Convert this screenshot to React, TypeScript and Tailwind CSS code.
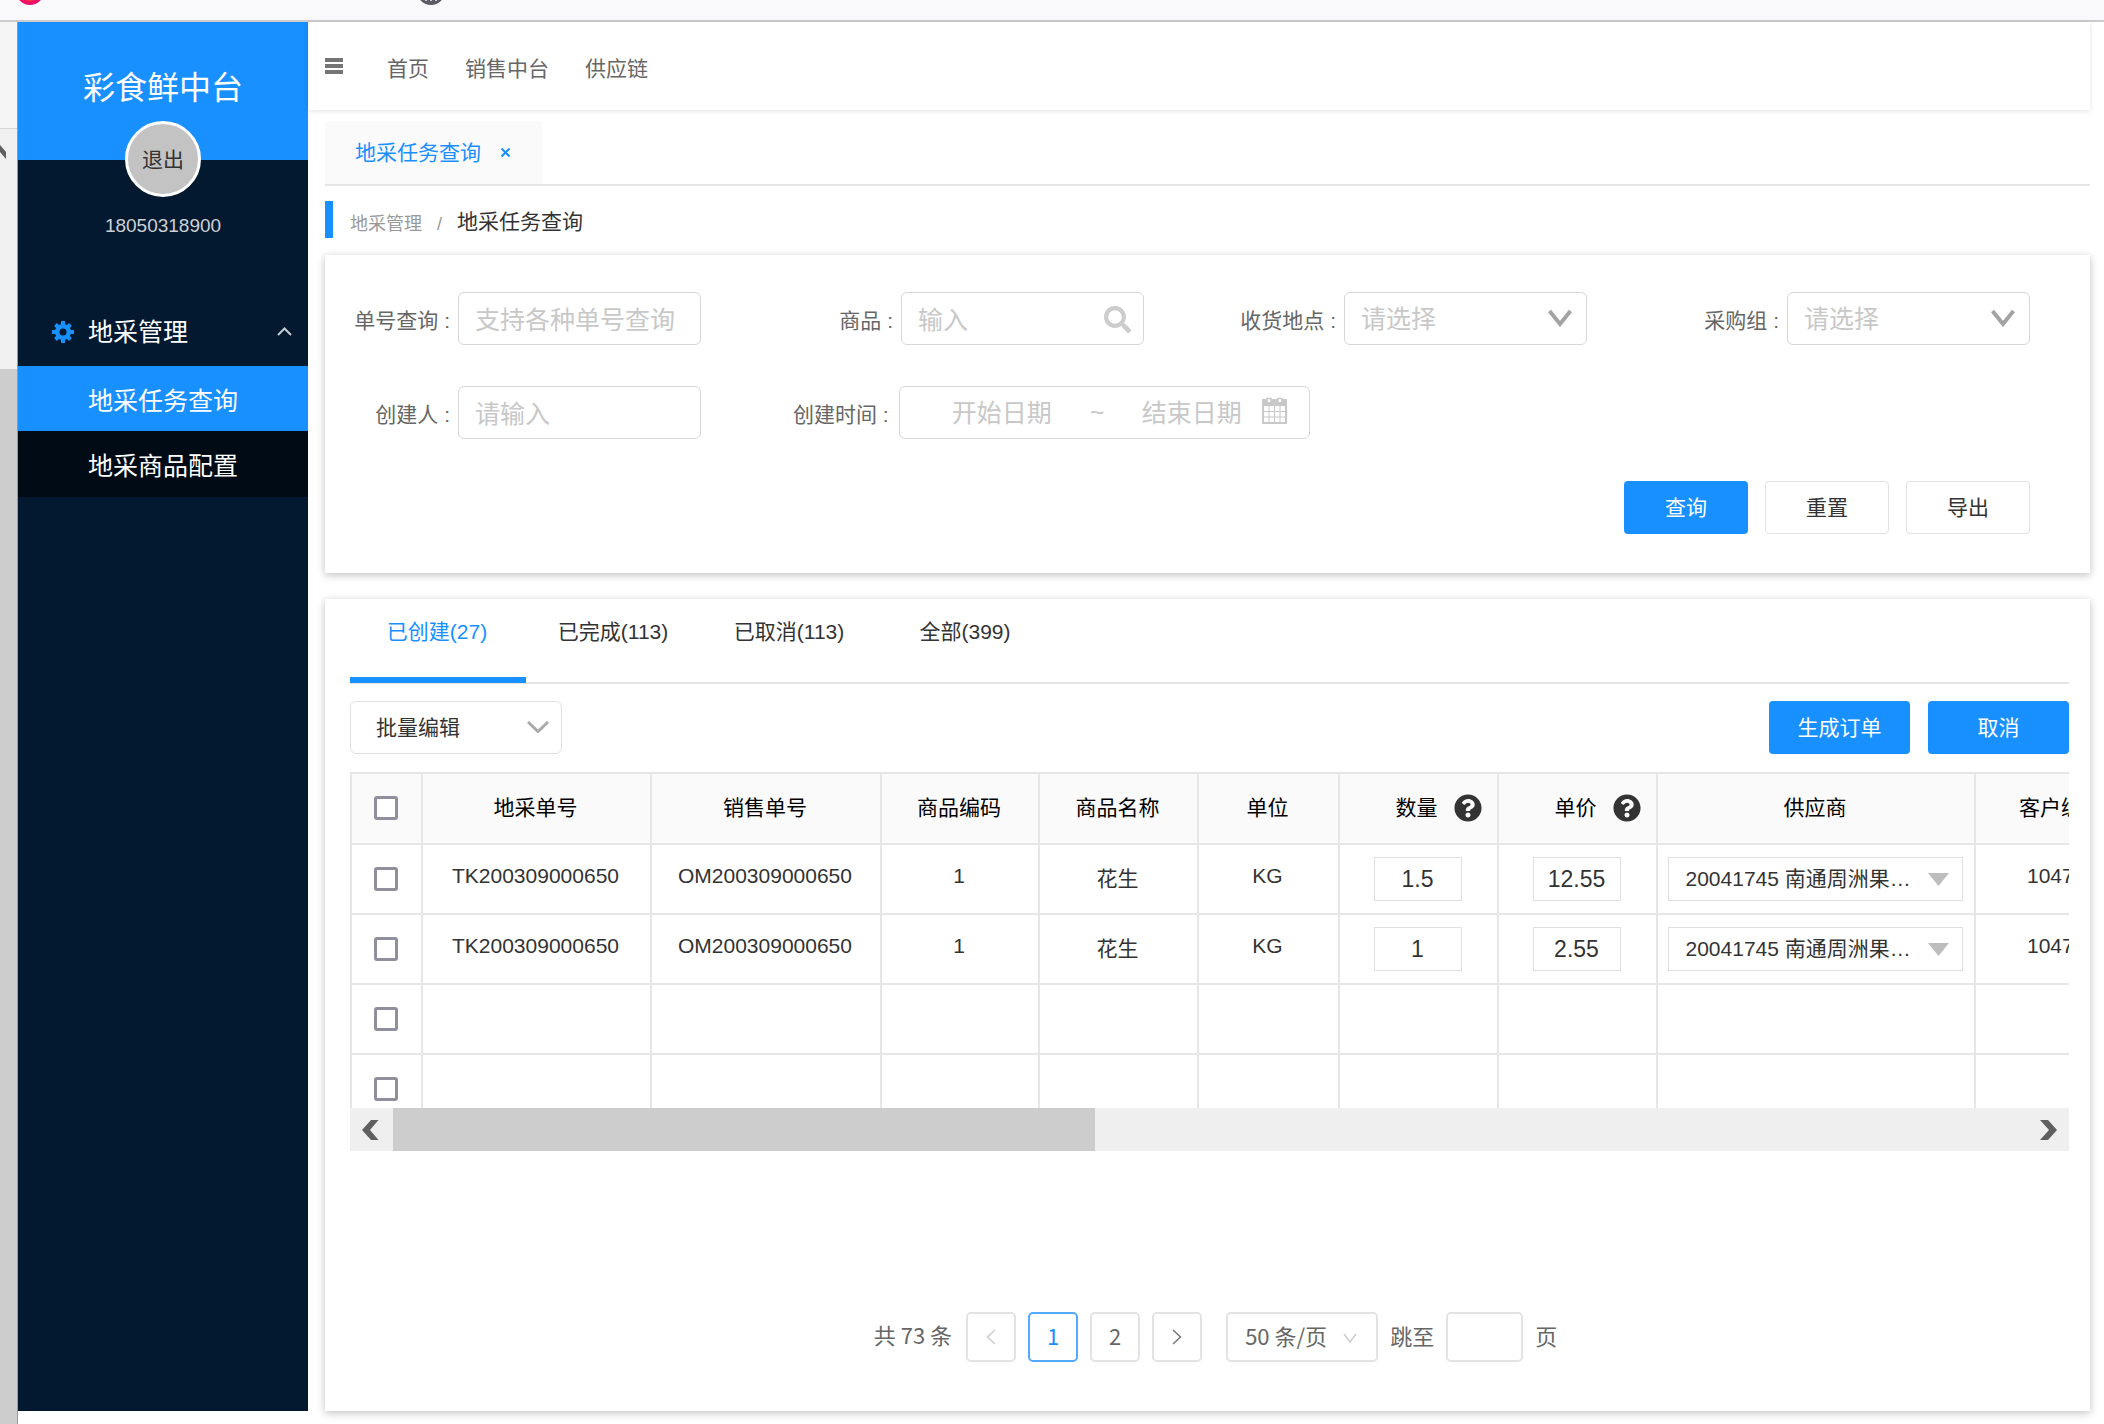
import React, { useState } from 'react';
import { FaQuestionCircle, FaSearch } from 'react-icons/fa';

const navLinks = ['首页', '销售中台', '供应链'];

const tabs = ['已创建(27)', '已完成(113)', '已取消(113)', '全部(399)'];

const columns = [
  { title: '地采单号', width: 229 },
  { title: '销售单号', width: 230 },
  { title: '商品编码', width: 158 },
  { title: '商品名称', width: 159 },
  { title: '单位', width: 141 },
  { title: '数量', width: 159, help: true },
  { title: '单价', width: 159, help: true },
  { title: '供应商', width: 318 },
  { title: '客户编码', width: 174 },
];

const rows = [
  { id: 1, task: 'TK200309000650', sale: 'OM200309000650', code: '1', name: '花生', unit: 'KG', count: '1.5', price: '12.55', supplier: '20041745 南通周洲果…', customer: '104701' },
  { id: 2, task: 'TK200309000650', sale: 'OM200309000650', code: '1', name: '花生', unit: 'KG', count: '1', price: '2.55', supplier: '20041745 南通周洲果…', customer: '104701' },
];

const fieldClass = 'block h-[53px] w-[243px] rounded-md border border-[#d6d6d6] bg-white px-4 pt-[3px] text-[25px] text-[#333] placeholder:text-[#c8c8c8] outline-none';

function Field({ id, label, children }: { id: string; label: string; children: React.ReactNode }) {
  return (
    <div className="flex items-center justify-end gap-2">
      <label htmlFor={id} className="whitespace-nowrap pt-[4px] text-[#666]">{label} :</label>
      {children}
    </div>
  );
}

function SelectField({ id }: { id: string }) {
  return (
    <div className="relative">
      <select id={id} className="block h-[53px] w-[243px] appearance-none rounded-md border border-[#d6d6d6] bg-white px-4 pt-[2px] text-[25px] text-[#c8c8c8] outline-none">
        <option>请选择</option>
      </select>
      <svg className="pointer-events-none absolute right-[15px] top-[18px] h-[17px] w-6" viewBox="0 0 24 17" fill="none" stroke="#a3a3a3" strokeWidth="4">
        <path d="M1.5 1l10.5 13L22.500 1" />
      </svg>
    </div>
  );
}

function Checkbox({ label }: { label: string }) {
  return (
    <input
      type="checkbox"
      aria-label={label}
      className="mx-auto block h-6 w-6 appearance-none rounded-[3px] border-3 border-[#8f8f9d] bg-white checked:bg-[#1890ff]"
    />
  );
}

function GearIcon() {
  return (
    <svg className="mb-[3px] h-[22px] w-[22px]" viewBox="0 0 22 22" fill="none" stroke="#1890ff">
      <circle cx="11" cy="11" r="5.8" strokeWidth="4.400" />
      <path d="M11 0v4M11 18v4M0 11h4M18 11h4M3.500 3.500l3 3M15.500 15.500l3 3M3.500 18.500l3-3M15.500 6.500l3-3" strokeWidth="4" />
    </svg>
  );
}

function Sidebar() {
  return (
    <aside className="flex w-[290px] shrink-0 flex-col bg-[#03192f]">
      <div className="flex h-[138px] flex-col items-center bg-[#1890ff] pt-[42px]">
        <h1 className="text-[32px] leading-[48px] text-white">彩食鲜中台</h1>
        <button className="mt-[9px] h-[76px] w-[76px] shrink-0 rounded-full border-3 border-white bg-[#c3c3c3] pt-[2px] text-[21px] text-[#333]">退出</button>
      </div>
      <p className="mt-[52px] text-center text-[19px] leading-7 text-[#cdd1d5]">18050318900</p>

      <nav className="mt-[60px]">
        <button className="flex h-[66px] w-full items-center pl-[34px] pr-4 text-[25px] text-white">
          <GearIcon />
          <span className="ml-[14px]">地采管理</span>
          <svg className="mb-1 ml-auto h-[9px] w-[15px]" viewBox="0 0 15 9" fill="none" stroke="#c5cbd1" strokeWidth="2">
            <path d="M1 8l6.500-6.500L14 8" />
          </svg>
        </button>
        <a href="#tasks" className="flex h-[65px] items-center bg-[#1890ff] pl-[70px] pt-[6px] text-[25px] text-white">地采任务查询</a>
        <a href="#goods" className="flex h-[66px] items-center bg-[#000b16] pl-[70px] pt-[6px] text-[25px] text-white">地采商品配置</a>
      </nav>
    </aside>
  );
}

function SearchPanel() {
  return (
    <section className="mt-[17px] bg-white pb-[39px] pl-[30px] pr-[60px] pt-[37px] shadow-[0_2px_8px_rgba(0,0,0,0.25)]">
      <div className="grid grid-cols-[346px_1fr_1fr_1fr] gap-y-[41px]">
        <Field id="order" label="单号查询">
          <input id="order" placeholder="支持各种单号查询" className={fieldClass} />
        </Field>
        <Field id="goods" label="商品">
          <div className="relative">
            <input id="goods" placeholder="输入" className={fieldClass} />
            <FaSearch className="pointer-events-none absolute right-[13px] top-[14px] h-[27px] w-[27px] text-[#ccc]" />
          </div>
        </Field>
        <Field id="place" label="收货地点">
          <SelectField id="place" />
        </Field>
        <Field id="group" label="采购组">
          <SelectField id="group" />
        </Field>
        <Field id="creator" label="创建人">
          <input id="creator" placeholder="请输入" className={fieldClass} />
        </Field>
        <div className="col-span-2 flex items-center gap-[10px] pl-[92px]">
          <label htmlFor="start" className="whitespace-nowrap pt-[4px] text-[#666]">创建时间 :</label>
          <div className="flex h-[53px] w-[411px] items-center rounded-md border border-[#d6d6d6] pl-[52px] text-[25px] text-[#c8c8c8]">
            <input id="start" placeholder="开始日期" className="w-[101px] pt-[3px] outline-none placeholder:text-[#c8c8c8]" />
            <span className="w-[89px] text-center">~</span>
            <input aria-label="结束日期" placeholder="结束日期" className="w-[101px] pt-[3px] outline-none placeholder:text-[#c8c8c8]" />
            <svg className="mb-1 ml-[19px] h-[27px] w-[25px]" viewBox="0 0 25 27" fill="none" stroke="#c8c8c8">
              <path d="M1 3h23v23H1z" strokeWidth="2" />
              <path d="M1 6h23" strokeWidth="6" />
              <path d="M5 5V1.500h4V5M16 5V1.500h4V5" fill="#fff" strokeWidth="1.500" />
              <path d="M1 14.500h23M1 20h23M7 9v17M12.500 9v17M18 9v17" strokeWidth="1" />
            </svg>
          </div>
        </div>
      </div>
      <div className="mt-[42px] flex justify-end gap-[17px]">
        <button className="h-[53px] w-[124px] rounded bg-[#1890ff] text-white">查询</button>
        <button className="h-[53px] w-[124px] rounded border border-[#e3e3e3] text-[#333]">重置</button>
        <button className="h-[53px] w-[124px] rounded border border-[#e3e3e3] text-[#333]">导出</button>
      </div>
    </section>
  );
}

function TaskTable() {
  return (
    <div className="mt-[18px]">
      <div className="h-[336px] overflow-hidden">
        <table className="w-[1798px] table-fixed border-collapse text-center text-[#333]">
          <colgroup>
            <col style={{ width: 71 }} />
            {columns.map(c => <col key={c.title} style={{ width: c.width }} />)}
          </colgroup>
          <thead>
            <tr className="h-[71px] bg-[#fafafa] text-black">
              <th className="border-2 border-[#e6e6e6] p-0 pb-[2px] pr-[2px]"><Checkbox label="全选" /></th>
              {columns.map(c => (
                <th key={c.title} className="border-2 border-[#e6e6e6] p-0 pb-[2px] pr-[2px] font-normal">
                  {c.help ? (
                    <span className="flex items-center justify-center gap-4 pl-[42px]">
                      {c.title}
                      <FaQuestionCircle className="h-7 w-7 text-[#333]" />
                    </span>
                  ) : c.title}
                </th>
              ))}
            </tr>
          </thead>
          <tbody>
            {rows.map(row => (
              <tr key={row.id} className="h-[70px]">
                <td className="border-2 border-[#e6e6e6] p-0 pr-[2px]"><Checkbox label={`选择第${row.id}行`} /></td>
                <td className="border-2 border-[#e6e6e6] p-0 pb-[6px] pr-[2px]">{row.task}</td>
                <td className="border-2 border-[#e6e6e6] p-0 pb-[6px] pr-[2px]">{row.sale}</td>
                <td className="border-2 border-[#e6e6e6] p-0 pb-[6px] pr-[2px]">{row.code}</td>
                <td className="border-2 border-[#e6e6e6] p-0 pr-[2px]">{row.name}</td>
                <td className="border-2 border-[#e6e6e6] p-0 pb-[6px] pr-[2px]">{row.unit}</td>
                <td className="border-2 border-[#e6e6e6] p-0 pr-[2px]">
                  <input aria-label="数量" defaultValue={row.count} className="mx-auto block h-11 w-[88px] border border-[#e0e0e0] text-center text-[23px] outline-none" />
                </td>
                <td className="border-2 border-[#e6e6e6] p-0 pr-[2px]">
                  <input aria-label="单价" defaultValue={row.price} className="mx-auto block h-11 w-[88px] border border-[#e0e0e0] text-center text-[23px] outline-none" />
                </td>
                <td className="border-2 border-[#e6e6e6] p-0 pr-[2px]">
                  <div className="relative mx-auto h-11 w-[295px]">
                    <select aria-label="供应商" className="block h-11 w-full appearance-none border border-[#e0e0e0] bg-white pl-[17px] outline-none">
                      <option>{row.supplier}</option>
                    </select>
                    <svg className="pointer-events-none absolute right-[14px] top-4 h-[13px] w-[21px]" viewBox="0 0 21 13" fill="#bdbdbd">
                      <path d="M0 0h21L10.500 13z" />
                    </svg>
                  </div>
                </td>
                <td className="border-2 border-[#e6e6e6] p-0 pb-[6px]">{row.customer}</td>
              </tr>
            ))}
            {[3, 4].map(id => (
              <tr key={id} className="h-[70px]">
                <td className="border-2 border-[#e6e6e6] p-0 pr-[2px]"><Checkbox label={`选择第${id}行`} /></td>
                {columns.map(c => <td key={c.title} className="border-2 border-[#e6e6e6] p-0" />)}
              </tr>
            ))}
          </tbody>
        </table>
      </div>
      <div className="flex h-[43px] bg-[#efefef]">
        <button aria-label="向左滚动" className="flex w-[43px] items-center justify-center pr-[2px]">
          <svg className="h-5 w-[17px]" viewBox="0 0 17 20" fill="#606060"><path d="M9 0h7.500L8 10l8.500 10H9L0 10z" /></svg>
        </button>
        <div className="flex-1">
          <div className="h-full w-[43%] bg-[#cdcdcd]" />
        </div>
        <button aria-label="向右滚动" className="flex w-[43px] items-center justify-center pl-[2px]">
          <svg className="h-5 w-[17px]" viewBox="0 0 17 20" fill="#606060"><path d="M8 0H0l9 10L0 20h8l9-10z" /></svg>
        </button>
      </div>
    </div>
  );
}

function Pagination() {
  const pageClass = 'flex h-[50px] w-[50px] items-center justify-center rounded-[5px] border-2 border-[#e3e3e3] pb-[3px]';
  return (
    <div className="mt-auto flex items-center justify-center pl-3 font-['Noto_Sans_CJK_SC',sans-serif] text-[22px] text-[#666]">
      <span className="pb-[5px]">共 73 条</span>
      <div className="ml-[14px] flex gap-3">
        <button aria-label="上一页" className={pageClass}>
          <svg className="mt-[3px] h-4 w-[10px]" viewBox="0 0 10 16" fill="none" stroke="#ccc" strokeWidth="1.500"><path d="M9 1L1.500 8L9 15" /></svg>
        </button>
        <button className="flex h-[50px] w-[50px] items-center justify-center rounded-[5px] border-2 border-[#52aaff] pb-[3px] text-[#1890ff]">1</button>
        <button className={pageClass}>2</button>
        <button aria-label="下一页" className={pageClass}>
          <svg className="mt-[3px] h-4 w-[10px]" viewBox="0 0 10 16" fill="none" stroke="#777" strokeWidth="1.500"><path d="M1 1l7.500 7L1 15" /></svg>
        </button>
      </div>
      <div className="relative ml-6">
        <select aria-label="每页条数" className="block h-[50px] w-[152px] appearance-none rounded-[5px] border-2 border-[#e3e3e3] bg-white pb-[3px] pl-[17px] outline-none">
          <option>50 条/页</option>
        </select>
        <svg className="pointer-events-none absolute right-[21px] top-[21px] h-[10px] w-[14px]" viewBox="0 0 14 10" fill="none" stroke="#ccc" strokeWidth="1.500"><path d="M1 1l6 8l6-8" /></svg>
      </div>
      <label htmlFor="jump" className="ml-3 pb-[3px]">跳至</label>
      <input id="jump" className="mx-3 h-[50px] w-[77px] rounded-[5px] border-2 border-[#e3e3e3] px-2 outline-none" />
      <span className="pb-[3px]">页</span>
    </div>
  );
}

export default function App() {
  const [activeTab, setActiveTab] = useState(0);

  return (
    <div className="flex min-h-screen flex-col overflow-hidden bg-white font-['Liberation_Sans','Noto_Sans_CJK_SC',sans-serif] text-[21px]">
      {/* browser chrome */}
      <div className="h-[22px] shrink-0 border-b-2 border-[#ccc] bg-[#f9f9fb]">
        <svg className="h-[6px] w-[460px]" viewBox="0 0 460 6">
          <circle cx="30" cy="-9" r="14" fill="#f0106a" />
          <circle cx="30" cy="-9" r="10" fill="#ff3b30" />
          <circle cx="431" cy="-9" r="14" fill="#5b5b66" />
          <path d="M426 0v1M431 0v1M436 0v1" stroke="#c9c9d0" strokeWidth="2" />
        </svg>
      </div>

      <div className="flex flex-1">
        <div className="flex w-[18px] shrink-0 flex-col border-r border-[#999] bg-[#f0f0f0]">
          <div className="h-[107px] border-b border-[#d5d5d5] bg-[#f5f5f5]" />
          <svg className="mt-4 h-[14px] w-[6px]" viewBox="0 0 6 14" fill="#606060"><path d="M0 0l6 7v7L0 7z" /></svg>
          <div className="mt-[210px] flex-1 bg-[#cdcdcd]" />
        </div>

        <div className="flex min-w-0 flex-1 pb-[13px]">
          <Sidebar />

          <main className="flex min-w-0 flex-1 flex-col pr-[14px]">
            <header className="flex h-[88px] items-center pl-[17px] text-[#666] shadow-[0_1px_5px_rgba(0,0,0,0.12)]">
              <button aria-label="折叠菜单" className="mr-11">
                <svg className="h-4 w-[18px]" viewBox="0 0 18 16" stroke="#757575" strokeWidth="4"><path d="M0 2h18M0 8h18M0 14h18" /></svg>
              </button>
              <nav className="flex gap-9 pt-[5px]">
                {navLinks.map(link => <a key={link} href="#nav">{link}</a>)}
              </nav>
            </header>

            <div className="flex flex-1 flex-col pl-[17px] pt-[11px]">
              <div className="flex border-b-2 border-[#e5e5e5]">
                <div className="flex h-[63px] w-[217px] items-center rounded-t bg-[#fafafa] pl-[30px] text-[#1890ff]">
                  <a href="#tasks">地采任务查询</a>
                  <button aria-label="关闭" className="ml-5">
                    <svg className="h-[9px] w-[9px]" viewBox="0 0 9 9" stroke="#1890ff" strokeWidth="2"><path d="M0.500 0.500l8 8M8.500 0.500l-8 8" /></svg>
                  </button>
                </div>
              </div>

              <div className="mt-[15px] flex h-[37px] items-center border-l-8 border-[#1890ff] pl-[17px]">
                <a href="#manage" className="pt-[9px] text-[18px] text-[#999]">地采管理</a>
                <span className="w-[35px] pt-[9px] text-center text-[18px] text-[#999]">/</span>
                <span className="pt-[4px] text-[#333]">地采任务查询</span>
              </div>

              <SearchPanel />

              <section className="mt-[26px] flex flex-1 flex-col bg-white pb-[49px] pl-[25px] pr-[21px] shadow-[0_2px_8px_rgba(0,0,0,0.25)]">
                <div role="tablist" className="flex border-b-2 border-[#e5e5e5]">
                  {tabs.map((tab, i) => (
                    <button
                      key={tab}
                      role="tab"
                      aria-selected={i === activeTab}
                      onClick={() => setActiveTab(i)}
                      className={`-mb-px h-[84px] w-[176px] border-b-[6px] pb-[13px] pr-[2px] ${
                        i === activeTab ? 'border-[#1890ff] text-[#1890ff]' : 'border-transparent text-[#333]'
                      }`}
                    >
                      {tab}
                    </button>
                  ))}
                </div>

                <div className="mt-[17px] flex items-center">
                  <div className="relative">
                    <select aria-label="批量编辑" className="block h-[53px] w-[212px] appearance-none rounded-md border border-[#e0e0e0] bg-white pl-[25px] text-[#333] outline-none">
                      <option>批量编辑</option>
                    </select>
                    <svg className="pointer-events-none absolute right-[13px] top-5 h-3 w-[22px]" viewBox="0 0 22 12" fill="none" stroke="#aaa" strokeWidth="3"><path d="M1 1l10 9.500L21 1" /></svg>
                  </div>
                  <button className="ml-auto h-[53px] w-[141px] rounded bg-[#1890ff] text-white">生成订单</button>
                  <button className="ml-[18px] h-[53px] w-[141px] rounded bg-[#1890ff] text-white">取消</button>
                </div>

                <TaskTable />
                <Pagination />
              </section>
            </div>
          </main>
        </div>
      </div>
    </div>
  );
}
